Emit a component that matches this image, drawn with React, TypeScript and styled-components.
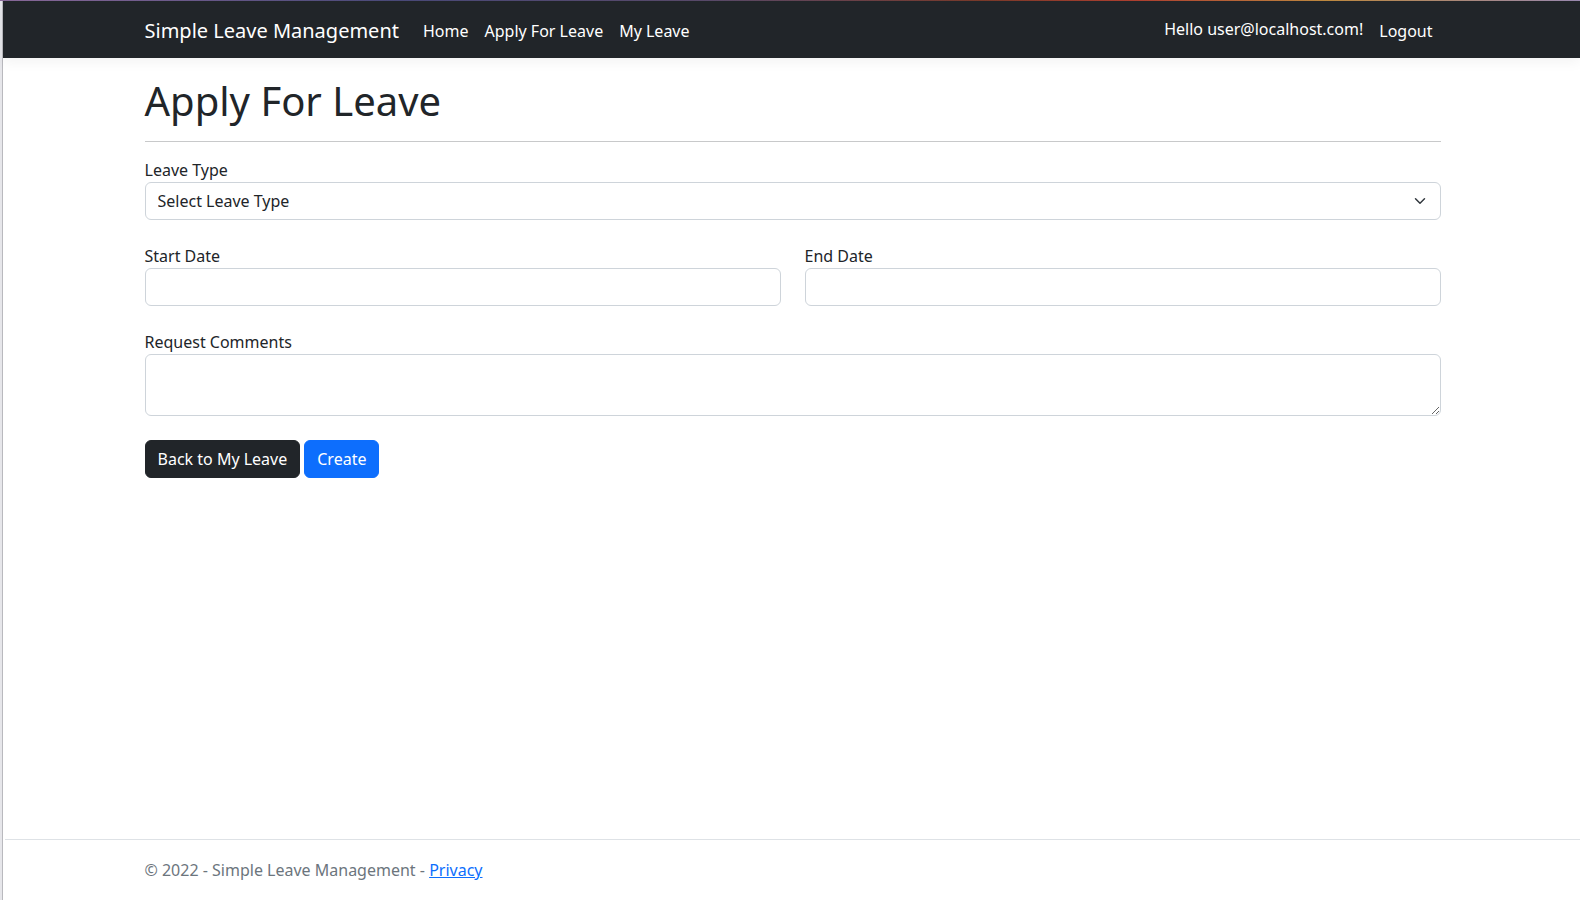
import styled, { createGlobalStyle } from 'styled-components';

const GlobalStyle = createGlobalStyle`
  * {
    box-sizing: border-box;
  }
  html {
    background: #e6e6ea;
  }
  body {
    margin: 0;
    font-family: 'Noto Sans', 'Liberation Sans', sans-serif;
    font-size: 16px;
    line-height: 1.5;
    color: #212529;
  }
`;

const Shell = styled.div`
  min-height: 100vh;
  display: flex;
  flex-direction: column;
`;

const TopEdge = styled.div`
  height: 1px;
  background: linear-gradient(
    90deg,
    #8a6a9a 0%,
    #4a4a7a 25%,
    #5a4a6a 45%,
    #7a3a2a 62%,
    #b04030 72%,
    #c08a40 84%,
    #9a8ab0 100%
  );
`;

const Window = styled.div`
  flex: 1;
  margin-left: 2px;
  padding-left: 2px;
  border-left: 1px solid #b9b9be;
  background: #fff;
  display: flex;
  flex-direction: column;
`;

const Container = styled.div`
  width: 100%;
  max-width: 1320px;
  margin: 0 auto;
  padding: 0 12px;
`;

const Header = styled.header`
  position: relative;
  z-index: 1;
  margin-left: -2px;
  padding: 10px 0 6px 2px;
  background: #212529;
  border-bottom: 1px solid #212529;
  box-shadow: 0 4px 12px rgba(0, 0, 0, 0.05);
`;

const NavInner = styled(Container)`
  display: flex;
  align-items: center;
`;

const Brand = styled.a`
  font-size: 20px;
  line-height: 30px;
  padding: 5px 0;
  margin-right: 16px;
  color: #fff;
  text-decoration: none;
`;

const NavList = styled.ul<{ grow?: boolean }>`
  display: flex;
  list-style: none;
  margin: 0;
  padding: 0;
  flex-grow: ${(props) => (props.grow ? 1 : 0)};
`;

const NavLink = styled.a<{ offset?: number }>`
  display: block;
  padding: 8px;
  padding-top: ${(props) => 8 + (props.offset || 0)}px;
  padding-bottom: ${(props) => 8 - (props.offset || 0)}px;
  color: #fff;
  text-decoration: none;
`;

const Main = styled.main`
  flex: 1;
  padding-top: 19px;
  padding-bottom: 16px;
`;

const Title = styled.h1`
  font-size: 40px;
  font-weight: 400;
  line-height: 1.2;
  margin: 0 0 8px;
`;

const Rule = styled.hr`
  margin: 16px 0;
  border: 0;
  border-top: 1px solid #c8c9ca;
`;

const FormGroup = styled.div`
  margin-bottom: 24px;
`;

const FormRow = styled.div`
  display: grid;
  grid-template-columns: 1fr 1fr;
  column-gap: 24px;
  margin-bottom: 24px;
`;

const Label = styled.label`
  display: block;
  line-height: 24px;
`;

const Field = styled.input`
  display: block;
  width: 100%;
  padding: 6px 12px;
  font: inherit;
  line-height: 24px;
  color: #212529;
  background: #fff;
  border: 1px solid #ced4da;
  border-radius: 6px;
`;

const Select = styled.select`
  display: block;
  width: 100%;
  padding: 6px 36px 6px 12px;
  font: inherit;
  line-height: 24px;
  color: #212529;
  background-color: #fff;
  background-image: url("data:image/svg+xml,%3csvg xmlns='http://www.w3.org/2000/svg' viewBox='0 0 16 16'%3e%3cpath fill='none' stroke='%23343a40' stroke-linecap='round' stroke-linejoin='round' stroke-width='2' d='m2 5 6 6 6-6'/%3e%3c/svg%3e");
  background-repeat: no-repeat;
  background-position: right 12px center;
  background-size: 16px 12px;
  border: 1px solid #ced4da;
  border-radius: 6px;
  appearance: none;
`;

const TextArea = styled.textarea`
  display: block;
  width: 100%;
  padding: 6px 12px;
  font: inherit;
  line-height: 24px;
  color: #212529;
  background: #fff;
  border: 1px solid #ced4da;
  border-radius: 6px;
`;

const Actions = styled.div`
  display: flex;
  gap: 4px;
`;

const Button = styled.button<{ variant: 'dark' | 'primary' }>`
  padding: 6px 12px;
  font: inherit;
  line-height: 24px;
  color: #fff;
  background: ${(props) => (props.variant === 'dark' ? '#212529' : '#0d6efd')};
  border: 1px solid ${(props) => (props.variant === 'dark' ? '#212529' : '#0d6efd')};
  border-radius: 6px;
  cursor: pointer;
`;

const Footer = styled.footer`
  border-top: 1px solid #dee2e6;
  padding-top: 1px;
  line-height: 59px;
  white-space: nowrap;
  color: #6c757d;
`;

const FooterLink = styled.a`
  color: #0d6efd;
`;

const App = () => {
  return (
    <>
      <GlobalStyle />
      <Shell>
        <TopEdge />
        <Window>
          <Header>
            <NavInner>
              <Brand href='#'>Simple Leave Management</Brand>
              <NavList grow>
                <li>
                  <NavLink href='#'>Home</NavLink>
                </li>
                <li>
                  <NavLink href='#'>Apply For Leave</NavLink>
                </li>
                <li>
                  <NavLink href='#'>My Leave</NavLink>
                </li>
              </NavList>
              <NavList>
                <li>
                  <NavLink href='#' offset={-2}>
                    Hello user@localhost.com!
                  </NavLink>
                </li>
                <li>
                  <NavLink href='#'>Logout</NavLink>
                </li>
              </NavList>
            </NavInner>
          </Header>
          <Main>
            <Container>
              <Title>Apply For Leave</Title>
              <Rule />
              <form onSubmit={(e) => e.preventDefault()}>
                <FormGroup>
                  <Label htmlFor='leaveType'>Leave Type</Label>
                  <Select id='leaveType' defaultValue=''>
                    <option value=''>Select Leave Type</option>
                  </Select>
                </FormGroup>
                <FormRow>
                  <div>
                    <Label htmlFor='startDate'>Start Date</Label>
                    <Field id='startDate' type='text' />
                  </div>
                  <div>
                    <Label htmlFor='endDate'>End Date</Label>
                    <Field id='endDate' type='text' />
                  </div>
                </FormRow>
                <FormGroup>
                  <Label htmlFor='comments'>Request Comments</Label>
                  <TextArea id='comments' rows={2} />
                </FormGroup>
                <Actions>
                  <Button type='button' variant='dark'>
                    Back to My Leave
                  </Button>
                  <Button type='submit' variant='primary'>
                    Create
                  </Button>
                </Actions>
              </form>
            </Container>
          </Main>
          <Footer>
            <Container>
              &copy; 2022 - Simple Leave Management -{' '}
              <FooterLink href='#'>Privacy</FooterLink>
            </Container>
          </Footer>
        </Window>
      </Shell>
    </>
  );
};

export default App;
